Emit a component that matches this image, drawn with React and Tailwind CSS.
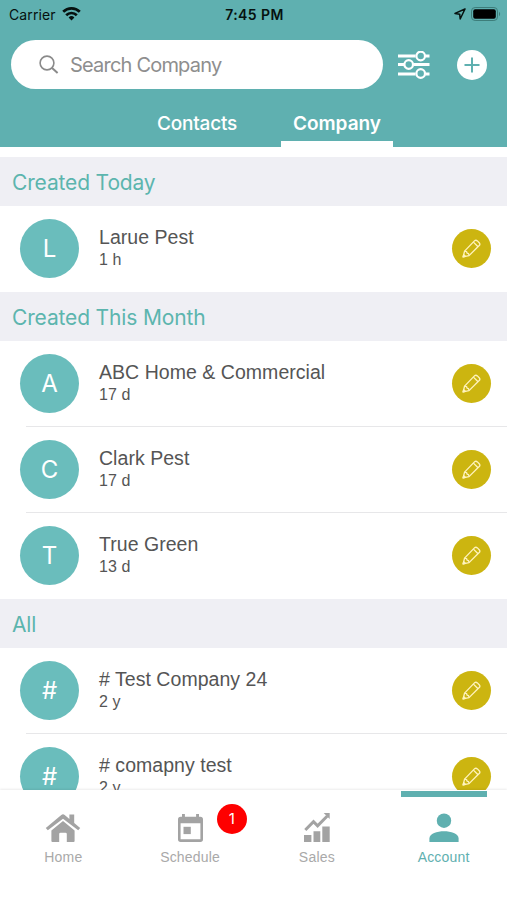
const sections = [
  { title: 'Created Today', rows: [{ name: 'Larue Pest', age: '1 h' }] },
  {
    title: 'Created This Month',
    rows: [
      { name: 'ABC Home & Commercial', age: '17 d' },
      { name: 'Clark Pest', age: '17 d' },
      { name: 'True Green', age: '13 d' }
    ]
  },
  {
    title: 'All',
    rows: [
      { name: '# Test Company 24', age: '2 y' },
      { name: '# comapny test', age: '2 y' }
    ]
  }
];

function WifiIcon() {
  return (
    <svg width="19" height="14" viewBox="0 0 19 14" fill="none" stroke="#06110f" strokeWidth="2.7">
      <path d="M1.2 4.8a11.8 11.8 0 0 1 16.6 0" />
      <path d="M4.2 8.2a7.5 7.5 0 0 1 10.6 0" />
      <path d="M9.5 13.4 6.6 10.5a4.1 4.1 0 0 1 5.8 0z" fill="#06110f" stroke="none" />
    </svg>
  );
}

function LocationIcon() {
  return (
    <svg width="12" height="12" viewBox="0 0 12 12" fill="none" stroke="#06110f" strokeWidth="1.5" strokeLinejoin="round">
      <path d="M11 1 1 5.4l4.7.8.5 4.8z" />
    </svg>
  );
}

function BatteryIcon() {
  return (
    <svg width="30" height="14" viewBox="0 0 30 14">
      <rect x=".5" y=".5" width="26" height="13" rx="3.6" fill="none" stroke="#3d7d7a" />
      <rect x="2.2" y="2.2" width="22.6" height="9.6" rx="2" fill="#000" />
      <path d="M28 4.8c1.5.7 1.5 3.7 0 4.4z" fill="#3d7d7a" />
    </svg>
  );
}

function SearchIcon() {
  return (
    <svg width="20" height="20" viewBox="0 0 20 20" fill="none" stroke="#8a8a8a" strokeWidth="1.6">
      <circle cx="8" cy="8" r="6.9" />
      <path d="m12.8 12.8 5.8 5.3" strokeWidth="2" />
    </svg>
  );
}

function FilterIcon() {
  return (
    <svg width="32" height="28" viewBox="0 0 32 28" fill="none" stroke="#fff" strokeWidth="2.2">
      <path d="M0 5h17.5M27.5 5H31.500M0 13.5h6M15.5 13.5H31.500M0 23h17.5M27.5 23H31.500" strokeWidth="2.8" />
      <circle cx="22.7" cy="5" r="4.3" />
      <circle cx="10.7" cy="13.5" r="4.3" />
      <circle cx="22.7" cy="22.5" r="4.3" />
    </svg>
  );
}

function PencilIcon() {
  return (
    <svg width="19" height="19" viewBox="0 0 20 20" fill="none" stroke="#fff3bd" strokeWidth="1.4" strokeLinejoin="round">
      <path d="m1.2 18.8 1.5-6L13.1 2q1.5-1.5 3.1 0l1.9 1.9q1.4 1.5 0 3L7.400 17.500z" />
      <path d="m2.700 12.800 2.100.4.500 1.700 1.600.5.500 2.100M12 3.300l4.900 4.900" />
      <path d="m1.200 18.800.6-2.300 1.700 1.700z" fill="#fff3bd" />
    </svg>
  );
}

function HomeIcon() {
  return (
    <svg width="36" height="30" viewBox="0 0 36 30" fill="#a3a3a3">
      <path d="M6.400 17.400 18 7.900l11.600 9.500V28q0 1-1 1h-6.800v-8q0-1.300-1.300-1.300h-5q-1.300 0-1.300 1.300v8H7.400q-1 0-1-1z" />
      <path d="M.8 15 16.300 1.900q1.700-1.300 3.400 0l4.700 4V1.500h4.800V10L35.200 15l-2 2.300L18 5.800 2.800 17.300z" />
    </svg>
  );
}

function ScheduleIcon() {
  return (
    <svg width="27" height="30" viewBox="0 0 27 30" fill="#a3a3a3">
      <path fillRule="evenodd" d="M5 1h2.9v2.7h11.2V1H22v2.7h1.4q2.6 0 2.6 2.7v19.9q0 2.7-2.6 2.7H3.6Q1 29 1 26.3V6.4Q1 3.7 3.6 3.7H5zM3.600 10.300v16h19.800v-16z" />
      <path d="M6.500 13.800h7.300v7.300H6.500z" />
    </svg>
  );
}

function SalesIcon() {
  return (
    <svg width="28" height="31" viewBox="0 0 28 31" fill="#a3a3a3">
      <path d="M1 23h7.400v7H1zM10.500 19.300h6.800V30h-6.800zM19.300 14.500h7.400V30h-7.400z" />
      <path d="m2.300 18 8.200-8.300 4.100 4.200L24.300 4" fill="none" stroke="#a3a3a3" strokeWidth="3" />
      <path d="M20.700 1h6v6z" />
    </svg>
  );
}

function AccountIcon() {
  return (
    <svg width="30" height="30" viewBox="0 0 30 30" fill="#5fb0b0">
      <circle cx="15" cy="7.7" r="7.2" />
      <path d="M.4 29v-3.600C.4 20.600 8.200 18.200 15 18.200s14.600 2.400 14.600 7.200V29z" />
    </svg>
  );
}

function CompanyRow({ row, divided }) {
  return (
    <div>
      <div className="flex h-[86px] items-center pb-px pl-[20px] pr-4">
        <div className="flex size-[59px] shrink-0 items-center justify-center rounded-full bg-[#6abdbc] pt-px font-[Inter,sans-serif] text-[24px] text-white">
          {row.name[0]}
        </div>
        <div className="ml-5 flex-1 pb-px text-[#555]">
          <div className="text-[19.5px] leading-6 tracking-[0.04px]">{row.name}</div>
          <div className="text-[16px] leading-[22px] tracking-[0.1px]">{row.age}</div>
        </div>
        <div className="flex size-[39px] items-center justify-center rounded-full bg-[#ccb510]">
          <PencilIcon />
        </div>
      </div>
      {divided && <div className="-mt-px ml-[26px] h-px bg-[#e7e7e9]" />}
    </div>
  );
}

function NavItem({ icon, label, active, badge }) {
  return (
    <div className="relative flex flex-1 flex-col items-center">
      <div className={active ? 'mt-px h-[6px] w-[86px] bg-[#5fb0b0]' : 'mt-px h-[6px] w-[86px]'} />
      <div className="mt-[15px] flex h-[31px] items-center">{icon}</div>
      <div className={active ? 'mt-[5px] text-[14px] leading-[18px] tracking-[0.2px] text-[#5fb0b0]' : 'mt-[5px] text-[14px] leading-[18px] tracking-[0.2px] text-[#a9a9a9]'}>
        {label}
      </div>
      {badge && (
        <div className="absolute left-[90px] top-[14px] flex size-[30px] items-center justify-center rounded-full bg-[#fe0000] pt-px font-[Inter,sans-serif] text-[15px] text-white">
          {badge}
        </div>
      )}
    </div>
  );
}

export default function App() {
  return (
    <div className="flex h-[900px] w-[507px] flex-col overflow-hidden bg-white font-['Liberation_Sans',sans-serif]">
      {/* Header */}
      <header className="flex h-[147px] shrink-0 flex-col bg-[#5fb0b0] font-[Inter,sans-serif]">
        <div className="grid h-7 grid-cols-3 items-center pl-[8px] pr-[6px] text-[#06110f]">
          <div className="flex items-center gap-[6px] pl-px text-[14px] tracking-[0.1px]">
            <span>Carrier</span>
            <WifiIcon />
          </div>
          <div className="text-center text-[14px] font-semibold tracking-[0.4px]">7:45 PM</div>
          <div className="flex items-center justify-end gap-[5px]">
            <LocationIcon />
            <BatteryIcon />
          </div>
        </div>

        <div className="mt-3 flex h-[49px] items-center pl-[11px]">
          <div className="flex h-[49px] w-[372px] items-center gap-[11px] rounded-full bg-white pl-7 text-[20px] text-[#8e8e8e]">
            <SearchIcon />
            <span className="tracking-[-0.8px]">Search Company</span>
          </div>
          <div className="ml-[15px] mt-px">
            <FilterIcon />
          </div>
          <div className="ml-[27px] flex size-[30px] items-center justify-center rounded-full bg-white">
            <svg width="16" height="16" viewBox="0 0 16 16" stroke="#5fb0b0" strokeWidth="2">
              <path d="M8 .5v15M.5 8h15" />
            </svg>
          </div>
        </div>

        <nav className="mt-[17px] flex flex-1 gap-7 pl-[141px] text-[19px] leading-9 text-white">
          <div className="w-28 text-center font-medium tracking-[-0.2px]">Contacts</div>
          <div className="flex w-28 flex-col text-center font-semibold">
            <span className="h-[35px]">Company</span>
            <div className="h-[6px] bg-white" />
          </div>
        </nav>
      </header>

      {/* Company list */}
      <main className="h-[643px] shrink-0 overflow-hidden pt-[10px]">
        {sections.map(section => (
          <section key={section.title}>
            <h2 className="flex h-[49px] items-center bg-[#efeff4] pl-3 pt-[2px] font-[Inter,sans-serif] text-[21px] tracking-[-0.15px] text-[#5cb5ae]">
              {section.title}
            </h2>
            {section.rows.map((row, i) => (
              <CompanyRow key={row.name} row={row} divided={i < section.rows.length - 1} />
            ))}
          </section>
        ))}
      </main>

      {/* Bottom navigation */}
      <footer className="flex flex-1 bg-white shadow-[0_-1px_2px_rgba(0,0,0,0.08)]">
        <NavItem icon={<HomeIcon />} label="Home" />
        <NavItem icon={<ScheduleIcon />} label="Schedule" badge="1" />
        <NavItem icon={<SalesIcon />} label="Sales" />
        <NavItem icon={<AccountIcon />} label="Account" active />
      </footer>
    </div>
  );
}
